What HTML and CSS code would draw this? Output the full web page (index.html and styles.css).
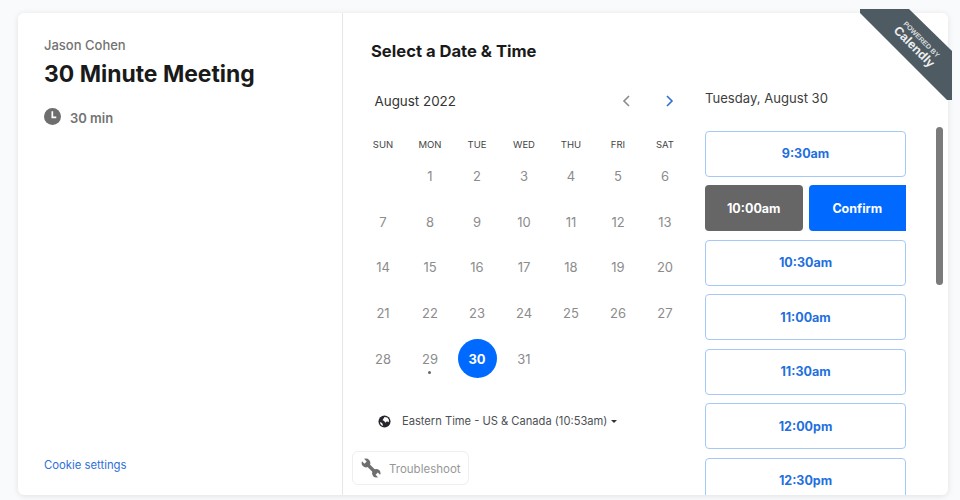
FILE: index.html
```html
<!DOCTYPE html>
<html lang="en">
<head>
<meta charset="utf-8">
<title>30 Minute Meeting</title>
<link rel="stylesheet" href="styles.css">
</head>
<body>
<div class="card">
  <aside class="details">
    <div class="owner">Jason Cohen</div>
    <h1 class="event">30 Minute Meeting</h1>
    <div class="duration">
      <svg class="clock" viewBox="0 0 18 18"><circle cx="9" cy="9" r="9" fill="#6d6e70"/><path d="M8.800 3.500V10H13" fill="none" stroke="#fff" stroke-width="1.800"/></svg>
      <span>30 min</span>
    </div>
    <a class="cookie">Cookie settings</a>
  </aside>
  <main class="main">
    <h2 class="heading">Select a Date &amp; Time</h2>
    <div class="columns">
      <section class="calendar">
        <div class="month-bar">
          <span class="month">August 2022</span>
          <div class="arrows">
            <svg class="arrow" viewBox="0 0 10 14"><path d="M8 2 3 7l5 5" fill="none" stroke="#8a8a8a" stroke-width="1.600"/></svg>
            <svg class="arrow" viewBox="0 0 10 14"><path d="M2 2l5 5-5 5" fill="none" stroke="#2f6fd8" stroke-width="1.600"/></svg>
          </div>
        </div>
        <div class="weekdays"><span>SUN</span><span>MON</span><span>TUE</span><span>WED</span><span>THU</span><span>FRI</span><span>SAT</span></div>
        <div class="days">
          <span></span><span>1</span><span>2</span><span>3</span><span>4</span><span>5</span><span>6</span>
          <span>7</span><span>8</span><span>9</span><span>10</span><span>11</span><span>12</span><span>13</span>
          <span>14</span><span>15</span><span>16</span><span>17</span><span>18</span><span>19</span><span>20</span>
          <span>21</span><span>22</span><span>23</span><span>24</span><span>25</span><span>26</span><span>27</span>
          <span>28</span><span class="today">29</span><span class="selected">30</span><span>31</span>
        </div>
        <div class="timezone">
          <svg class="globe" viewBox="0 0 14 14"><circle cx="7" cy="7" r="6.500" fill="#26262c"/><path d="M7 2.200 10 2.600 11.800 5 11.600 7.800 9.600 6.800 8 8.400 6.400 6.200 4.800 5.600Z" fill="#fff"/><path d="M2.200 7.600 4.400 8.600 5.600 11.600 4.200 11.200 2.600 9.600Z" fill="#fff"/></svg>
          <span>Eastern Time - US &amp; Canada (10:53am)</span>
          <i class="caret"></i>
        </div>
      </section>
      <section class="times">
        <div class="date">Tuesday, August 30</div>
        <div class="slots">
          <div class="slot">9:30am</div>
          <div class="slot-pair"><div class="picked">10:00am</div><div class="confirm">Confirm</div></div>
          <div class="slot">10:30am</div>
          <div class="slot">11:00am</div>
          <div class="slot">11:30am</div>
          <div class="slot">12:00pm</div>
          <div class="slot">12:30pm</div>
        </div>
      </section>
      <div class="scroll-track"><div class="scroll-thumb"></div></div>
    </div>
  </main>
  <div class="trouble">
    <svg class="wrench" viewBox="0 0 20 20">
      <path d="M5 5 15 15" stroke="#6f6f6f" stroke-width="3.400"/>
      <circle cx="5" cy="5" r="4.400" fill="#6f6f6f"/>
      <circle cx="15.300" cy="15.300" r="4.200" fill="#6f6f6f"/>
      <path d="M4.600 4.600 .5 .5M15.700 15.700 19.500 19.500" stroke="#fff" stroke-width="3.200"/>
    </svg>
    <span class="trouble-label">Troubleshoot</span>
  </div>
  <div class="ribbon">
    <svg class="ribbon-shape" viewBox="0 0 92 91"><path d="M0 0H49L92 42V91H87L0 4Z" fill="#4f5b62"/></svg>
    <div class="ribbon-text"><span class="powered">POWERED BY</span><span class="brand">Calendly</span></div>
  </div>
</div>
</body>
</html>
```
FILE: styles.css
```css
* { box-sizing: border-box; }
html, body { height: 100%; }
body {
  margin: 0;
  padding: 13px 12px 5px 18px;
  background: #f9fafc;
  font-family: "Inter", "Liberation Sans", sans-serif;
  overflow: hidden;
}
.card {
  position: relative;
  display: flex;
  height: 482px;
  background: #fff;
  border-radius: 6px;
  box-shadow: 0 1px 6px rgba(0,0,0,.1);
}
.details {
  display: flex;
  flex-direction: column;
  width: 325px;
  padding: 24px 0 22px 26px;
  border-right: 1px solid #e6e6e6;
}
.owner { font-size: 13px; line-height: 16px; font-weight: 500; color: #737373; }
.event { margin: 5px 0 0; font-size: 22.900px; line-height: 32px; font-weight: 700; color: #1a1a1a; }
.duration {
  display: flex;
  align-items: center;
  gap: 9px;
  margin-top: 20px;
  font-size: 13px;
  font-weight: 600;
  color: #737373;
}
.clock { width: 17px; height: 17px; margin-top: -3px; }
.cookie { margin-top: auto; font-size: 11.300px; line-height: 16px; color: #2f6fd8; }
.main { flex: 1; padding: 28px 0 0 28px; min-width: 0; }
.heading { margin: 0; font-size: 16.600px; line-height: 21px; font-weight: 700; color: #1a1a1a; }
.columns { display: flex; height: 433px; }
.calendar { width: 315px; padding-top: 29px; }
.month-bar { display: flex; justify-content: space-between; align-items: center; height: 20px; padding-left: 3.500px; padding-right: 11px; }
.month { font-size: 13.400px; color: #333; }
.arrows { display: flex; gap: 34px; }
.arrow { width: 10px; height: 14px; }
.weekdays, .days { display: grid; grid-template-columns: repeat(7, 47px); justify-items: center; margin-left: -11.500px; }
.weekdays { margin-top: 28px; font-size: 9.500px; line-height: 12px; color: #444; }
.days { grid-auto-rows: 45.700px; margin-top: 2px; font-size: 13px; color: #8c8c8c; align-items: center; }
.days span { position: relative; display: flex; align-items: center; justify-content: center; width: 39px; height: 39px; }
.today::after { content: ""; position: absolute; left: 17.500px; bottom: 4px; width: 3px; height: 3px; border-radius: 50%; background: #666; }
.selected { border-radius: 50%; background: #0069ff; color: #fff; font-weight: 700; }
.timezone { display: flex; align-items: center; margin-top: 32px; padding-left: 7px; font-size: 11.150px; line-height: 16px; color: #4d5055; }
.globe { width: 13px; height: 13px; margin-right: 11px; }
.caret { width: 0; height: 0; margin-left: 4px; border: 3px solid transparent; border-top: 3.500px solid #333; border-bottom: 0; }
.times { width: 201px; margin-left: 19px; padding-top: 27px; min-width: 0; overflow: hidden; }
.date { font-size: 13.100px; line-height: 18px; color: #3d3d3d; }
.slots { display: flex; flex-direction: column; gap: 8.500px; margin-top: 23.700px; }
.slot, .picked, .confirm { display: flex; flex: none; align-items: center; justify-content: center; height: 46px; border-radius: 4px; font-size: 12.500px; font-weight: 700; }
.slot { border: 1px solid #a6c8f7; color: #1f6fe0; }
.slot-pair { display: flex; flex: none; gap: 6px; }
.picked { flex: 1; background: #666; color: #fff; }
.confirm { flex: 1; background: #0069ff; color: #fff; border-radius: 4px 0 0 4px; }
.scroll-track { width: 7px; margin-left: 30px; padding-top: 65px; }
.scroll-thumb { height: 158px; border-radius: 4px; background: #7b7b7b; }
.trouble {
  position: absolute;
  left: 334px;
  top: 438px;
  display: flex;
  align-items: center;
  gap: 8px;
  width: 117px;
  height: 34px;
  padding-left: 8px;
  background: #fff;
  border: 1px solid #eeeeee;
  border-radius: 6px;
  font-size: 11.500px;
  color: #979797;
}
.trouble-label { padding-top: 1px; }
.wrench { width: 20px; height: 20px; }
.ribbon { position: absolute; left: 842px; top: -4px; width: 92px; height: 91px; }
.ribbon-shape { display: block; width: 92px; height: 91px; }
.ribbon-text {
  position: absolute;
  left: 22px;
  top: 24px;
  width: 70px;
  display: flex;
  flex-direction: column;
  align-items: center;
  color: #eef0f1;
  font-family: "Liberation Sans", sans-serif;
  font-weight: 700;
  transform: rotate(45deg);
}
.powered { font-size: 7px; line-height: 9px; color: #d8dcde; }
.brand { font-size: 12.500px; line-height: 13px; }
```
